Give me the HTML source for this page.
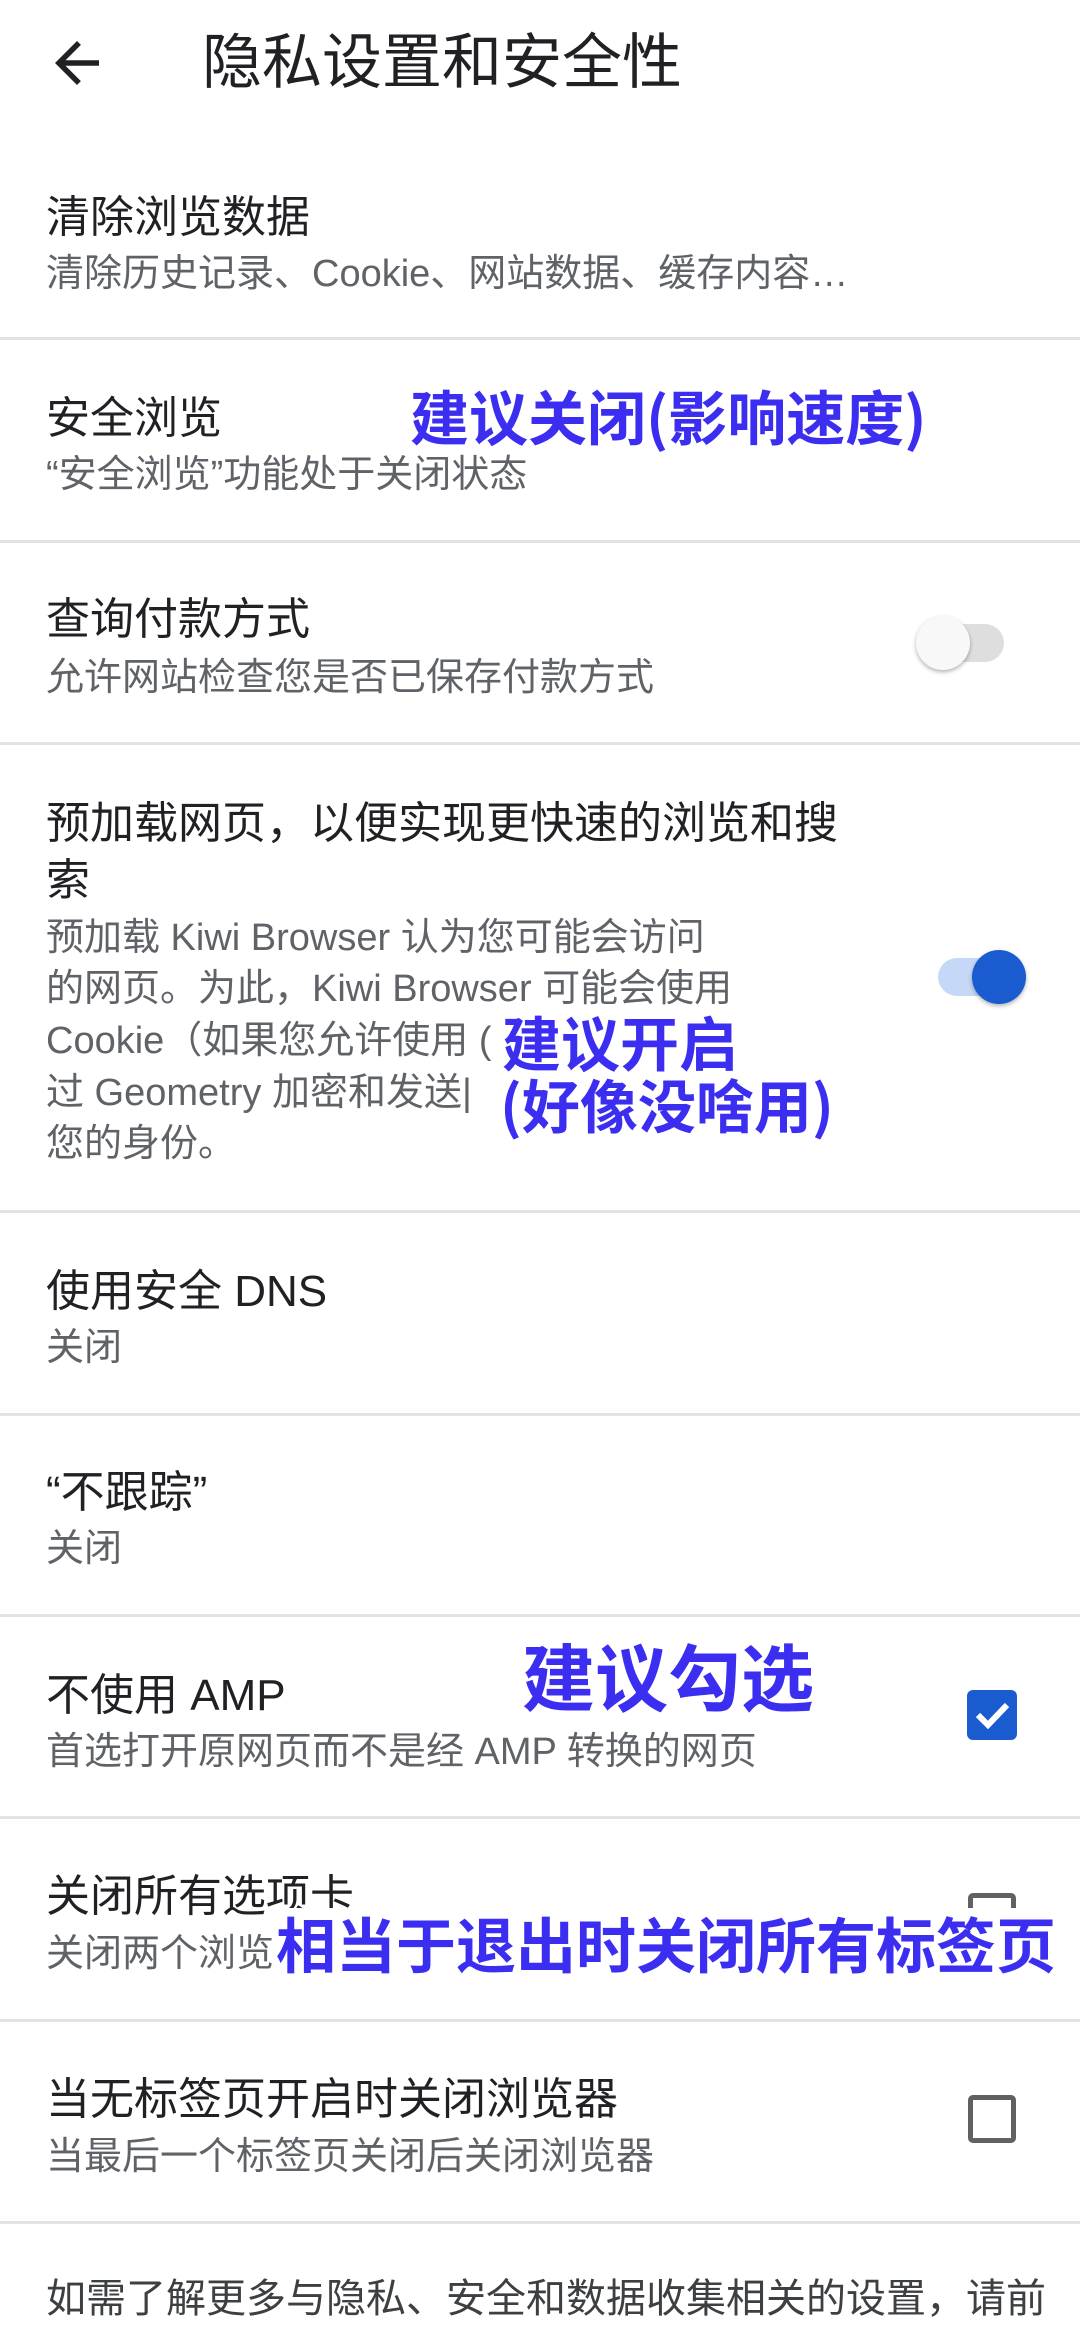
<!DOCTYPE html>
<html><head><meta charset="utf-8">
<style>
*{margin:0;padding:0;box-sizing:border-box}
body{width:1080px;height:2316px;background:#fff;position:relative;overflow:hidden;font-family:"Liberation Sans","Noto Sans CJK SC",sans-serif;}
.t{position:absolute;left:46px;white-space:nowrap;color:#202124;font-size:44px;line-height:56px;}
.s{position:absolute;left:46px;white-space:nowrap;color:#5f6368;font-size:38px;line-height:50px;}
.hr{position:absolute;left:0;width:1080px;height:3px;background:#e3e3e3;}
.a{position:absolute;white-space:nowrap;color:#3b2ef0;font-weight:bold;font-family:"WenQuanYi Zen Hei","Noto Sans CJK SC",sans-serif;}
.cb{position:absolute;left:968px;width:48px;height:48px;border:5px solid #616161;border-radius:5px;}
</style></head><body>
<svg style="position:absolute;left:44px;top:30px" width="66" height="66" viewBox="0 0 24 24"><path d="M20 11H7.83l5.59-5.59L12 4l-8 8 8 8 1.41-1.41L7.83 13H20v-2z" fill="#202124"/></svg>
<div class="t" style="left:202px;top:28px;font-size:60px;line-height:70px">隐私设置和安全性</div>

<div class="t" style="top:190px">清除浏览数据</div>
<div class="s" style="top:249px">清除历史记录、Cookie、网站数据、缓存内容…</div>
<div class="hr" style="top:337px"></div>

<div class="t" style="top:391px">安全浏览</div>
<div class="s" style="top:450px">“安全浏览”功能处于关闭状态</div>
<div class="a" style="left:410px;top:382px;font-size:59px;line-height:66px">建议关闭(影响速度)</div>
<div class="hr" style="top:540px"></div>

<div class="t" style="top:592px">查询付款方式</div>
<div class="s" style="top:653px">允许网站检查您是否已保存付款方式</div>
<div style="position:absolute;left:922px;top:624px;width:82px;height:38px;border-radius:19px;background:#dedede"></div>
<div style="position:absolute;left:916px;top:616px;width:54px;height:54px;border-radius:50%;background:#f8f8f8;box-shadow:0 2px 4px rgba(0,0,0,.3)"></div>
<div class="hr" style="top:742px"></div>

<div class="t" style="top:796px">预加载网页，以便实现更快速的浏览和搜</div>
<div class="t" style="top:853px">索</div>
<div class="s" style="top:913px">预加载 Kiwi Browser 认为您可能会访问</div>
<div class="s" style="top:964px">的网页。为此，Kiwi Browser 可能会使用</div>
<div class="s" style="top:1016px">Cookie（如果您允许使用 (</div>
<div class="s" style="top:1068px">过 Geometry 加密和发送|</div>
<div class="s" style="top:1119px">您的身份。</div>
<div style="position:absolute;left:938px;top:958px;width:80px;height:38px;border-radius:19px;background:#c6d8f7"></div>
<div style="position:absolute;left:972px;top:950px;width:54px;height:54px;border-radius:50%;background:#1a5bd0;box-shadow:0 2px 4px rgba(0,0,0,.3)"></div>
<div class="a" style="left:502px;top:1008px;font-size:59px;line-height:66px">建议开启</div>
<div class="a" style="left:500px;top:1070px;font-size:58px;line-height:66px">(好像没啥用)</div>
<div class="hr" style="top:1210px"></div>

<div class="t" style="top:1264px">使用安全 DNS</div>
<div class="s" style="top:1323px">关闭</div>
<div class="hr" style="top:1413px"></div>

<div class="t" style="top:1465px">“不跟踪”</div>
<div class="s" style="top:1524px">关闭</div>
<div class="hr" style="top:1614px"></div>

<div class="t" style="top:1668px">不使用 AMP</div>
<div class="s" style="top:1727px">首选打开原网页而不是经 AMP 转换的网页</div>
<div class="a" style="left:522px;top:1634px;font-size:73px;line-height:80px">建议勾选</div>
<div style="position:absolute;left:967px;top:1690px;width:50px;height:50px;border-radius:6px;background:#1a5bd0"></div>
<svg style="position:absolute;left:967px;top:1690px" width="50" height="50" viewBox="0 0 50 50"><path d="M11 25 L21 35 L40 15" stroke="#fff" stroke-width="6" fill="none"/></svg>
<div class="hr" style="top:1816px"></div>

<div class="t" style="top:1869px">关闭所有选项卡</div>
<div class="s" style="top:1929px">关闭两个浏览</div>
<div class="cb" style="top:1893px"></div>
<div class="a" style="left:276px;top:1908px;font-size:60px;line-height:70px;background:#fff">相当于退出时关闭所有标签页</div>
<div class="hr" style="top:2019px"></div>

<div class="t" style="top:2072px">当无标签页开启时关闭浏览器</div>
<div class="s" style="top:2132px">当最后一个标签页关闭后关闭浏览器</div>
<div class="cb" style="top:2095px"></div>
<div class="hr" style="top:2221px"></div>

<div class="s" style="top:2272px;font-size:40px;line-height:54px;color:#3c4043">如需了解更多与隐私、安全和数据收集相关的设置，请前</div>
</body></html>
